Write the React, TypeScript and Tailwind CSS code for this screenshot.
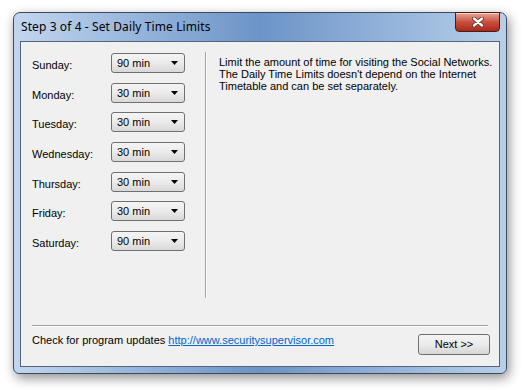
const days = [
  { name: 'Sunday:', value: '90 min', mt: 'mt-[1px]' },
  { name: 'Monday:', value: '30 min', mt: 'mt-[10px]' },
  { name: 'Tuesday:', value: '30 min', mt: 'mt-[9px]' },
  { name: 'Wednesday:', value: '30 min', mt: 'mt-[10px]' },
  { name: 'Thursday:', value: '30 min', mt: 'mt-[10px]' },
  { name: 'Friday:', value: '30 min', mt: 'mt-[9px]' },
  { name: 'Saturday:', value: '90 min', mt: 'mt-[10px]' },
]

function Combo({ value }: { value: string }) {
  return (
    <div className="w-[74px] h-[20px] shrink-0 rounded-[3px] border border-[#707070] bg-gradient-to-b from-[#f4f4f4] via-[#ebebeb] to-[#d8d8d8] flex items-center pl-[5px] pr-[6px]">
      <span className="flex-1 text-[11px] text-black leading-none">{value}</span>
      <svg width="7" height="4" viewBox="0 0 7 4">
        <path d="M0 0 L7 0 L3.5 4 Z" fill="#000" />
      </svg>
    </div>
  )
}

export default function App() {
  return (
    <div className="w-[524px] h-[390px] bg-white pl-[13px] pt-[12px]" style={{ fontFamily: '"Liberation Sans", Arial, sans-serif' }}>
      <div className="relative w-[494px] h-[362px] rounded-t-[7px] rounded-b-[6px] border border-[#3d4a5c] shadow-[2px_4px_12px_rgba(0,0,0,0.45)] bg-gradient-to-r from-[#c2d6ee] via-[#6c94c8] to-[#b8cfea] flex flex-col">
        {/* title bar */}
        <div className="h-[28px] flex items-center pl-[7px]">
          <span className="text-[12px] text-black tracking-[0.1px]" style={{ fontFamily: '"Noto Sans", "Open Sans", sans-serif' }}>
            Step 3 of 4 - Set Daily Time Limits
          </span>
        </div>

        {/* close button */}
        <div className="absolute right-[6px] top-[-1px] w-[45px] h-[20px] rounded-b-[4px] border border-[#4a1d18] bg-gradient-to-b from-[#e9a596] via-[#c9503f] to-[#a8281a] flex items-center justify-center shadow-[inset_0_1px_0_rgba(255,255,255,0.5)]">
          <svg width="12" height="10" viewBox="0 0 12 10">
            <path d="M2 1.5 L10 8.5 M10 1.5 L2 8.5" stroke="#5a2a24" strokeWidth="4" strokeLinecap="round" />
            <path d="M2 1.5 L10 8.5 M10 1.5 L2 8.5" stroke="#ffffff" strokeWidth="2.4" strokeLinecap="round" />
          </svg>
        </div>

        {/* client area */}
        <div className="mx-[6px] h-[326px] border border-[#55647a] bg-[#f0f0f0] px-[11px] flex flex-col">
          <div className="flex pt-[10px] h-[257px]">
            <div className="w-[173px] shrink-0 flex flex-col">
              {days.map((d) => (
                <div key={d.name} className={`${d.mt} h-[20px] flex items-center`}>
                  <span className="w-[79px] shrink-0 text-[11px] leading-[13px] text-black pt-[5px]">{d.name}</span>
                  <Combo value={d.value} />
                </div>
              ))}
            </div>
            <div className="w-[1px] h-[246px] shrink-0 bg-[#a0a0a0] border-r border-white box-content" />
            <div className="pl-[12px] pt-[4px] text-[11px] leading-[12px] text-black whitespace-nowrap">
              <p>Limit the amount of time for visiting the Social Networks.</p>
              <p>The Daily Time Limits doesn't depend on the Internet</p>
              <p>Timetable and can be set separately.</p>
            </div>
          </div>

          <div className="h-[1px] bg-[#a0a0a0] border-b border-white box-content mt-[26px]" />

          <div className="flex items-start mt-[7px]">
            <span className="text-[11px] leading-[13px] text-black">
              Check for program updates{' '}
              <a href="#" className="text-[#0066cc] underline">
                http://www.securitysupervisor.com
              </a>
            </span>
            <button className="ml-auto w-[72px] h-[21px] -mr-[2px] rounded-[3px] border border-[#707070] bg-gradient-to-b from-[#f4f4f4] via-[#ebebeb] to-[#d6d6d6] text-[11px] text-black">
              Next &gt;&gt;
            </button>
          </div>
        </div>
      </div>
    </div>
  )
}
